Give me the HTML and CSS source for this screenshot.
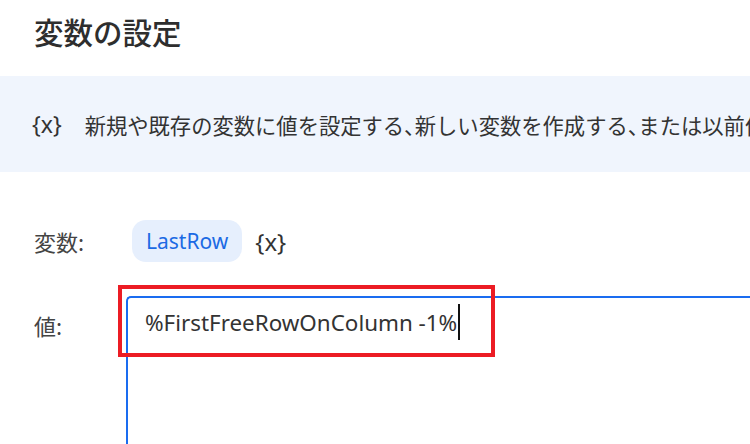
FILE: index.html
```html
<!DOCTYPE html>
<html lang="ja">
<head>
    <meta charset="utf-8">
    <title>変数の設定</title>
    <link rel="stylesheet" href="styles.css">
</head>
<body>
    <h1 class="title">変数の設定</h1>
    <div class="info">
        <span class="info-icon">{x}</span>
        <span class="info-text">新規や既存の変数に値を設定する、新しい変数を作成する、または以前作成した変数を上書きします</span>
    </div>
    <div class="form">
        <div class="row">
            <label class="label">変数:</label>
            <div class="field">
                <span class="pill">LastRow</span>
                <span class="var-icon">{x}</span>
            </div>
        </div>
        <div class="row value-row">
            <label class="label value-label">値:</label>
            <div class="input">
                <span class="input-text">%FirstFreeRowOnColumn -1%</span><span class="caret"></span>
            </div>
            <div class="highlight"></div>
        </div>
    </div>
</body>
</html>
```
FILE: styles.css
```css
body {
    margin: 0;
    background: #fff;
    overflow: hidden;
    font-family: "Noto Sans", "Noto Sans CJK JP", sans-serif;
    color: #333;
}
.title {
    margin: 0;
    height: 76px;
    box-sizing: border-box;
    padding: 11px 0 0 34px;
    font-family: "Noto Sans CJK JP", sans-serif;
    font-size: 29.5px;
    line-height: 40px;
    font-weight: 500;
    color: #2e2e2e;
}
.info {
    height: 96px;
    background: #f0f5fd;
    display: flex;
    align-items: center;
    padding-left: 32px;
    white-space: nowrap;
    overflow: hidden;
    font-size: 21.3px;
    color: #333;
}
.info-icon {
    font-size: 23px;
    margin-right: 23px;
}
.info-text {
    font-family: "Noto Sans CJK JP", sans-serif;
    font-feature-settings: "halt";
}
.form {
    padding: 48px 0 0 34px;
}
.row {
    display: flex;
    align-items: center;
    position: relative;
}
.label {
    width: 92px;
    flex: none;
    font-family: "Noto Sans CJK JP", sans-serif;
    font-size: 22px;
    color: #444;
}
.field {
    display: flex;
    align-items: center;
    gap: 13px;
}
.pill {
    margin-left: 6px;
    height: 42px;
    padding: 0 14px;
    border-radius: 14px;
    background: #e6effd;
    color: #1b6ae4;
    font-size: 21px;
    line-height: 42px;
}
.var-icon {
    font-size: 24px;
    color: #333;
}
.value-row {
    margin-top: 34px;
    align-items: flex-start;
}
.value-label {
    margin-top: 14px;
    line-height: 30px;
}
.input {
    flex: 1;
    height: 200px;
    margin-right: -20px;
    border: 2px solid #1a6cf0;
    border-right: none;
    border-bottom: none;
    border-top-left-radius: 5px;
    padding: 10px 0 0 17px;
    display: flex;
    align-items: flex-start;
}
.input-text {
    font-size: 22.4px;
    line-height: 30px;
    color: #333;
}
.caret {
    display: inline-block;
    width: 2px;
    height: 36px;
    margin-top: -4px;
    margin-left: 1px;
    background: #111;
}
.highlight {
    position: absolute;
    left: 84px;
    top: -11px;
    width: 377px;
    height: 72px;
    box-sizing: border-box;
    border: 4px solid #ec1c24;
}
```
